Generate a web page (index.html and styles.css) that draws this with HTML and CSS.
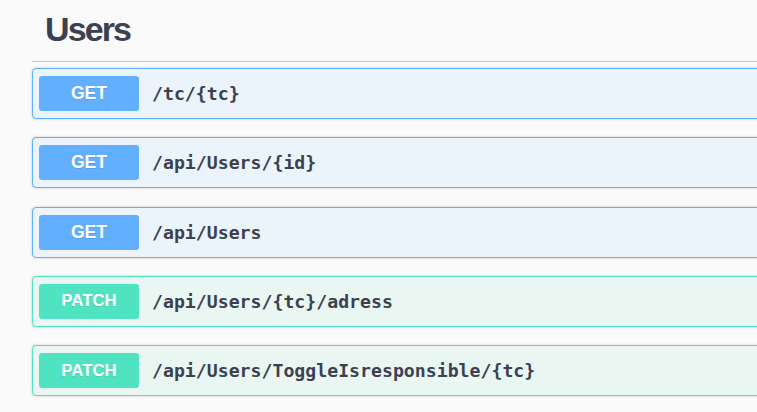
FILE: index.html
```html
<!DOCTYPE html>
<html lang="en">
<head>
<meta charset="utf-8">
<title>Users</title>
<link rel="stylesheet" href="styles.css">
</head>
<body>
<div class="page">
  <div class="section">
    <h3 class="tag">Users</h3>
    <div class="ops">
      <div class="op op-get"><span class="method">GET</span><span class="path">/tc/{tc}</span></div>
      <div class="op op-get"><span class="method">GET</span><span class="path">/api/Users/{id}</span></div>
      <div class="op op-get"><span class="method">GET</span><span class="path">/api/Users</span></div>
      <div class="op op-patch"><span class="method">PATCH</span><span class="path">/api/Users/{tc}/adress</span></div>
      <div class="op op-patch"><span class="method">PATCH</span><span class="path">/api/Users/ToggleIsresponsible/{tc}</span></div>
    </div>
  </div>
</div>
</body>
</html>
```

FILE: styles.css
```css
html, body {
  margin: 0;
  padding: 0;
  background: #fafafa;
  overflow: hidden;
}

body {
  font-family: "Liberation Sans", Arial, sans-serif;
  color: #3b4151;
}

.page {
  width: 757px;
  height: 412px;
  overflow: hidden;
}

.section {
  margin-left: 32px;
  margin-right: -40px;
}

.tag {
  margin: 0;
  padding: 12px 0 15px 13px;
  font-size: 34px;
  line-height: 34px;
  font-weight: 700;
  letter-spacing: -1.9px;
  color: #3b4151;
  border-bottom: 1px solid #c6c7cb;
}

.ops {
  padding-top: 6px;
}

.op {
  box-sizing: border-box;
  height: 51px;
  display: flex;
  align-items: center;
  padding: 0 6px;
  margin-bottom: 18.25px;
  border: 1px solid;
  border-radius: 4px;
  box-shadow: 0 0 3px rgba(0, 0, 0, 0.19);
}

.op-get {
  background: #ebf3fb;
  border-color: #61affe;
}

.op-patch {
  background: #e9f6f1;
  border-color: #50e3c2;
}

.method {
  width: 100px;
  height: 35px;
  border-radius: 3px;
  display: flex;
  align-items: center;
  justify-content: center;
  color: #fff;
  font-weight: 700;
  font-size: 17.5px;
  text-shadow: 0 1px 0 rgba(0, 0, 0, 0.1);
}

.op-get .method {
  background: #61affe;
}

.op-patch .method {
  background: #50e3c2;
  font-size: 16.8px;
}

.path {
  margin-left: 13px;
  font-family: "DejaVu Sans Mono", monospace;
  font-weight: 700;
  font-size: 18.2px;
  color: #3b4151;
}
```
